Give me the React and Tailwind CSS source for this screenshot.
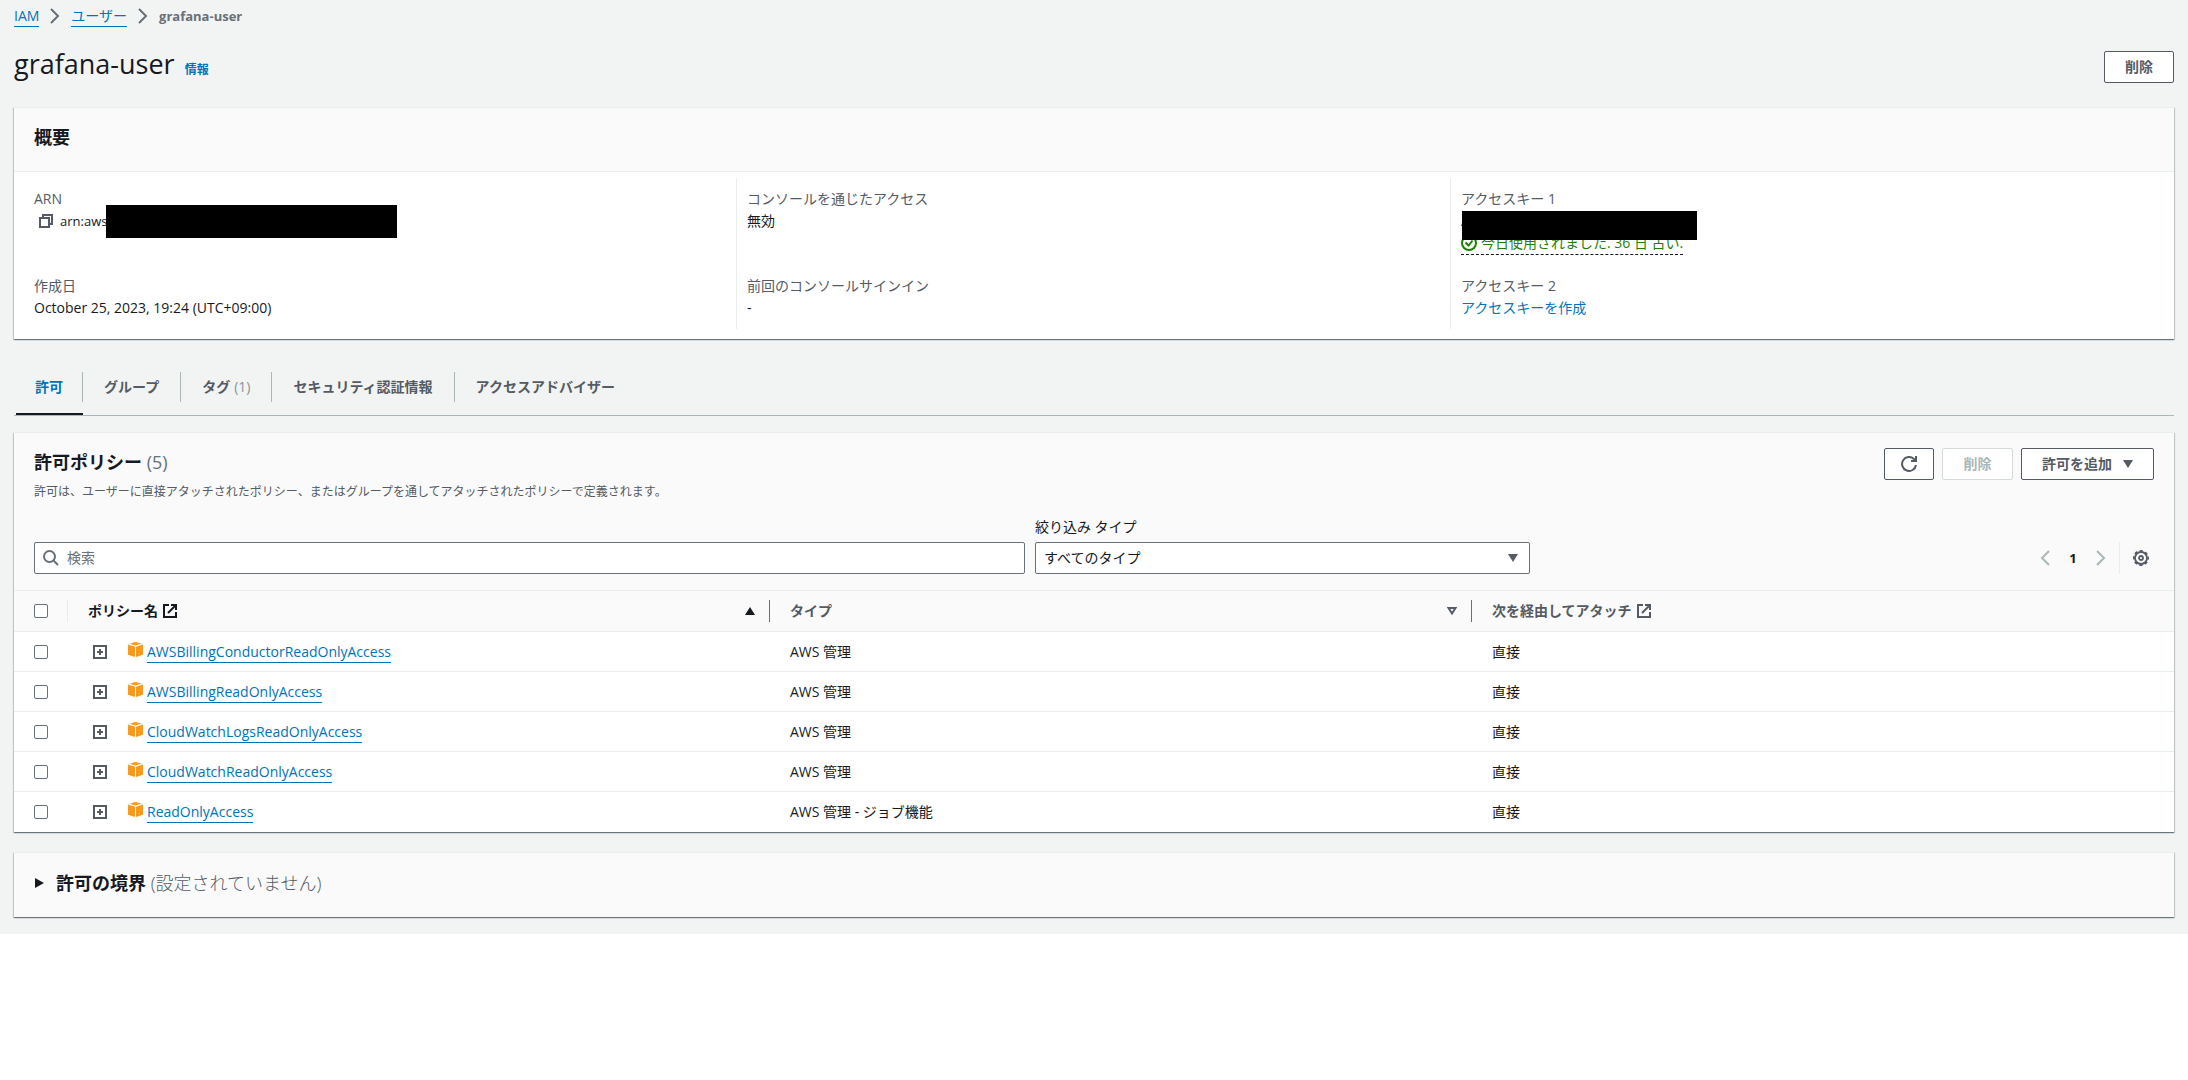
import React from "react";

const policies = [
  { name: "AWSBillingConductorReadOnlyAccess", type: "AWS 管理", via: "直接" },
  { name: "AWSBillingReadOnlyAccess", type: "AWS 管理", via: "直接" },
  { name: "CloudWatchLogsReadOnlyAccess", type: "AWS 管理", via: "直接" },
  { name: "CloudWatchReadOnlyAccess", type: "AWS 管理", via: "直接" },
  { name: "ReadOnlyAccess", type: "AWS 管理 - ジョブ機能", via: "直接" },
];

const tabs = [
  { label: "許可", active: true },
  { label: "グループ" },
  { label: "タグ", count: "(1)" },
  { label: "セキュリティ認証情報" },
  { label: "アクセスアドバイザー" },
];

function Chevron({ left = false, className = "" }) {
  return (
    <svg viewBox="0 0 16 16" className={"size-4 fill-none stroke-current " + className} aria-hidden="true">
      <path d={left ? "M12 1 5 8l7 7" : "M4 1l7 7-7 7"} strokeWidth="2" />
    </svg>
  );
}

function CopyIcon() {
  return (
    <svg viewBox="0 0 16 16" className="size-4 fill-none stroke-current" aria-hidden="true">
      <path d="M2 5h9v9H2z" strokeWidth="2" />
      <path d="M5 5V2h9v9h-3" strokeWidth="2" />
    </svg>
  );
}

function CheckCircle() {
  return (
    <svg viewBox="0 0 16 16" className="size-4 shrink-0 fill-none stroke-current" aria-hidden="true">
      <circle cx="8" cy="8" r="7" strokeWidth="2" />
      <path d="M4.500 7.500 7.500 10.500 11.500 5.500" strokeWidth="2" />
    </svg>
  );
}

function ExternalIcon() {
  return (
    <svg viewBox="0 0 16 16" className="size-4 shrink-0 fill-none stroke-current" aria-hidden="true">
      <path d="M7 2H2v12h12V9" strokeWidth="2" />
      <path d="M9 2h5v5M14 2 6 10" strokeWidth="2" />
    </svg>
  );
}

function RefreshIcon() {
  return (
    <svg viewBox="0 0 16 16" className="size-4 shrink-0 fill-none stroke-current" aria-hidden="true">
      <path d="M15 9a7 7 0 1 1-2-6l2 2" strokeWidth="2" />
      <path d="M15 0v5h-5" strokeWidth="2" />
    </svg>
  );
}

function SearchIcon() {
  return (
    <svg viewBox="0 0 16 16" className="size-4 fill-none stroke-current" aria-hidden="true">
      <circle cx="6.500" cy="6.500" r="5.500" strokeWidth="2" />
      <path d="M10.500 10.500l4.500 4.500" strokeWidth="2" />
    </svg>
  );
}

function GearIcon() {
  return (
    <svg viewBox="0 0 16 16" className="size-4 fill-none stroke-current" aria-hidden="true">
      <circle cx="8" cy="8" r="6" strokeWidth="1.800" />
      <circle cx="8" cy="8" r="7.200" strokeWidth="1.600" strokeDasharray="3.200 2.455" strokeDashoffset="1.600" />
      <circle cx="8" cy="8" r="2" strokeWidth="1.800" />
    </svg>
  );
}

function Triangle({ dir, className = "" }) {
  const paths = {
    down: "M0 1h10L5 9z",
    up: "M0 9h10L5 1z",
    right: "M1 0v10l9-5z",
  };
  return (
    <svg viewBox="0 0 10 10" className={"size-[10px] fill-current " + className} aria-hidden="true">
      <path d={paths[dir]} />
    </svg>
  );
}

function SortIcon() {
  return (
    <svg viewBox="0 0 10 10" className="size-[10px] fill-none stroke-current" aria-hidden="true">
      <path d="M1.500 2h7L5 7.500z" strokeWidth="2" />
    </svg>
  );
}

function ExpandIcon() {
  return (
    <svg viewBox="0 0 14 14" className="size-[14px] fill-none stroke-current" aria-hidden="true">
      <path d="M1 1h12v12H1z" strokeWidth="2" />
      <path d="M4 7h6M7 4v6" strokeWidth="2" />
    </svg>
  );
}

function CubeIcon() {
  return (
    <svg viewBox="0 0 15 15" className="size-[15px] fill-[#f7981f]" aria-hidden="true">
      <path d="M7.500 0 13.500 1.700 7.500 3.600 1.500 1.700z" />
      <path d="M0 2.500 7 4.700V15L0 12.800z" />
      <path d="M15 2.500 8 4.700V15l7-2.200z" />
    </svg>
  );
}

function Checkbox({ label }) {
  return (
    <input
      type="checkbox"
      aria-label={label}
      className="block size-[14px] appearance-none rounded-[2px] border border-[#687078] bg-white checked:bg-[#0073bb]"
    />
  );
}

function Card({ className = "", children }) {
  return (
    <section
      className={
        "border-t border-[#eaeded] bg-white shadow-[0_1px_1px_0_rgba(0,28,36,0.4),1px_1px_1px_0_rgba(0,28,36,0.15),-1px_1px_1px_0_rgba(0,28,36,0.15)] " +
        className
      }
    >
      {children}
    </section>
  );
}

function Button({ className = "", children, ...rest }) {
  return (
    <button
      type="button"
      className={
        "flex h-8 items-center justify-center rounded-[2px] border border-[#545b64] bg-white px-5 font-bold text-[#545b64] disabled:border-[#d5dbdb] disabled:text-[#aab7b8] " +
        className
      }
      {...rest}
    >
      {children}
    </button>
  );
}

function Field({ label, children }) {
  return (
    <div className="pb-[43px] last:pb-[10px]">
      <dt className="text-[#545b64]">{label}</dt>
      <dd>{children}</dd>
    </div>
  );
}

export default function App() {
  return (
    <div
      lang="ja"
      className="bg-[#f2f3f3] px-[14px] pb-[17px] font-['Open_Sans','Noto_Sans_CJK_JP',sans-serif] text-sm leading-[22px] text-[#16191f]"
    >
      <nav aria-label="パンくずリスト" className="pt-[5px]">
        <ol className="flex h-[22px] items-center text-[#687078]">
          <li>
            <a href="#iam" className="block border-b border-[#0073bb] leading-5 text-[#0073bb]">IAM</a>
          </li>
          <li className="px-2"><Chevron /></li>
          <li>
            <a href="#users" className="block border-b border-[#0073bb] leading-5 text-[#0073bb]">ユーザー</a>
          </li>
          <li className="px-2"><Chevron /></li>
          <li className="text-[13px] font-bold">grafana-user</li>
        </ol>
      </nav>

      <header className="flex items-start justify-between pt-6">
        <h1 className="flex items-baseline gap-[10px] text-[27px] leading-[26px]">
          grafana-user
          <a href="#info" className="text-xs font-bold text-[#0073bb]">情報</a>
        </h1>
        <Button>削除</Button>
      </header>

      <Card className="mt-6">
        <div className="border-b border-[#eaeded] bg-[#fafafa] px-5 pt-[17px] pb-[22px]">
          <h2 className="text-lg font-bold leading-6">概要</h2>
        </div>
        <dl className="mr-[10px] ml-2 grid grid-cols-3 pt-[6px] pb-[10px]">
          <div className="px-3 pt-[10px]">
            <Field label="ARN">
              <div className="relative flex items-center gap-[6px] pl-1 text-[13px]">
                <button type="button" aria-label="ARN をコピー" className="text-[#545b64]"><CopyIcon /></button>
                <span>arn:aws</span>
                <span className="absolute -top-[5px] left-[72px] h-[33px] w-[291px] bg-black" />
              </div>
            </Field>
            <Field label="作成日">October 25, 2023, 19:24 (UTC+09:00)</Field>
          </div>
          <div className="border-l border-[#eaeded] px-[10px] pt-[10px]">
            <Field label="コンソールを通じたアクセス">無効</Field>
            <Field label="前回のコンソールサインイン">-</Field>
          </div>
          <div className="border-l border-[#eaeded] px-[10px] pt-[10px]">
            <Field label="アクセスキー 1">
              <div className="relative -mb-[23px]">
                <div>A</div>
                <button type="button" className="flex h-[23px] items-center gap-1 border-b border-dashed border-[#16191f] text-[#1d8102]">
                  <CheckCircle />
                  今日使用されました. 36 日 古い.
                </button>
                <span className="absolute top-px left-px h-[29px] w-[235px] bg-black" />
              </div>
            </Field>
            <Field label="アクセスキー 2">
              <a href="#create-key" className="text-[#0073bb]">アクセスキーを作成</a>
            </Field>
          </div>
        </dl>
      </Card>

      <div role="tablist" className="mt-[22px] flex h-[55px] border-b border-[#aab7b8] pl-[2px]">
        {tabs.map((tab, i) => (
          <button
            key={tab.label}
            type="button"
            role="tab"
            aria-selected={!!tab.active}
            className={
              "flex flex-col font-bold " +
              (tab.active ? "border-b-2 border-[#16191f] text-[#0073bb]" : "text-[#545b64]")
            }
          >
            <span
              className={
                "mt-[11px] flex h-[30px] items-center gap-1 " +
                (i === 0 ? "px-[19px] " : "px-[21px] ") +
                (i < tabs.length - 1 ? "border-r border-[#aab7b8]" : "")
              }
            >
              {tab.label}
              {tab.count && <span className="font-normal text-[#879596]">{tab.count}</span>}
            </span>
          </button>
        ))}
      </div>

      <Card className="mt-4">
        <div className="bg-[#fafafa] px-5 pt-[15px] pb-4">
          <div className="flex items-start justify-between">
            <div>
              <h2 className="pt-[2px] pb-2 text-lg font-bold leading-6">
                許可ポリシー <span className="font-normal text-[#687078]">(5)</span>
              </h2>
              <p className="text-xs leading-5 text-[#545b64]">
                許可は、ユーザーに直接アタッチされたポリシー、またはグループを通してアタッチされたポリシーで定義されます。
              </p>
            </div>
            <div className="flex gap-2">
              <Button aria-label="更新" className="w-[50px]"><RefreshIcon /></Button>
              <Button disabled className="w-[71px]">削除</Button>
              <Button className="gap-[11px]">
                許可を追加
                <Triangle dir="down" />
              </Button>
            </div>
          </div>

          <div className="mt-[14px] grid grid-cols-[12fr_5fr] items-end">
            <div className="grid grid-cols-[2fr_1fr] items-end gap-[10px]">
              <div className="flex h-8 items-center gap-2 rounded-[2px] border border-[#687078] bg-white px-2 text-[#687078]">
                <SearchIcon />
                <input
                  type="search"
                  aria-label="検索"
                  placeholder="検索"
                  className="min-w-0 flex-1 bg-transparent outline-none placeholder:text-[#687078]"
                />
              </div>
              <div>
                <label htmlFor="type-filter" className="mb-1 block">絞り込み タイプ</label>
                <div className="grid items-center">
                  <select
                    id="type-filter"
                    className="col-start-1 row-start-1 h-8 w-full appearance-none rounded-[2px] border border-[#687078] bg-white px-2"
                  >
                    <option>すべてのタイプ</option>
                  </select>
                  <Triangle dir="down" className="pointer-events-none col-start-1 row-start-1 mr-3 justify-self-end text-[#545b64]" />
                </div>
              </div>
            </div>
            <div className="flex h-8 items-center justify-end">
              <button type="button" aria-label="前のページ" disabled className="text-[#aab7b8]"><Chevron left /></button>
              <button type="button" aria-current="page" className="w-10 text-center text-[13px] font-bold">1</button>
              <button type="button" aria-label="次のページ" disabled className="text-[#aab7b8]"><Chevron /></button>
              <div className="ml-[10px] flex h-8 items-center border-l border-[#eaeded] pr-[5px] pl-[13px]">
                <button type="button" aria-label="設定" className="text-[#545b64]"><GearIcon /></button>
              </div>
            </div>
          </div>
        </div>

        <table className="w-full table-fixed border-collapse text-left">
          <colgroup>
            <col className="w-[54px]" />
            <col />
            <col />
            <col />
          </colgroup>
          <thead>
            <tr className="h-[41px] border-y border-[#eaeded] bg-[#fafafa] text-[#545b64]">
              <th scope="col" className="p-0">
                <div className="flex h-[22px] items-center border-r border-[#eaeded] pl-5">
                  <Checkbox label="すべて選択" />
                </div>
              </th>
              <th scope="col" aria-sort="ascending" className="p-0 text-[#16191f]">
                <div className="flex h-[22px] items-center gap-1 border-r border-[#687078] pr-[14px] pl-5">
                  ポリシー名
                  <ExternalIcon />
                  <Triangle dir="up" className="ml-auto" />
                </div>
              </th>
              <th scope="col" className="p-0">
                <div className="flex h-[22px] items-center border-r border-[#687078] pr-[14px] pl-5">
                  <span className="flex-1">タイプ</span>
                  <SortIcon />
                </div>
              </th>
              <th scope="col" className="p-0">
                <div className="flex h-[22px] items-center gap-1 pl-5">
                  次を経由してアタッチ
                  <ExternalIcon />
                </div>
              </th>
            </tr>
          </thead>
          <tbody>
            {policies.map((p) => (
              <tr key={p.name} className="h-10 border-b border-[#eaeded] last:border-b-0">
                <td className="p-0 pl-5"><Checkbox label={p.name + " を選択"} /></td>
                <td className="p-0 pl-[25px]">
                  <div className="flex items-center">
                    <button type="button" aria-label={p.name + " を展開"} className="mr-[21px] text-[#545b64]"><ExpandIcon /></button>
                    <span className="mr-1 mb-1"><CubeIcon /></span>
                    <a href={"#" + p.name} className="border-b border-[#0073bb] pt-px leading-5 text-[#0073bb]">{p.name}</a>
                  </div>
                </td>
                <td className="p-0 pl-5">{p.type}</td>
                <td className="p-0 pl-5">{p.via}</td>
              </tr>
            ))}
          </tbody>
        </table>
      </Card>

      <Card className="mt-5">
        <button type="button" aria-expanded="false" className="flex w-full items-center gap-3 bg-[#fafafa] px-5 pt-[18px] pb-[22px] text-left text-lg leading-6">
          <Triangle dir="right" />
          <span>
            <b>許可の境界</b> <span className="font-light text-[#545b64]">(設定されていません)</span>
          </span>
        </button>
      </Card>
    </div>
  );
}
